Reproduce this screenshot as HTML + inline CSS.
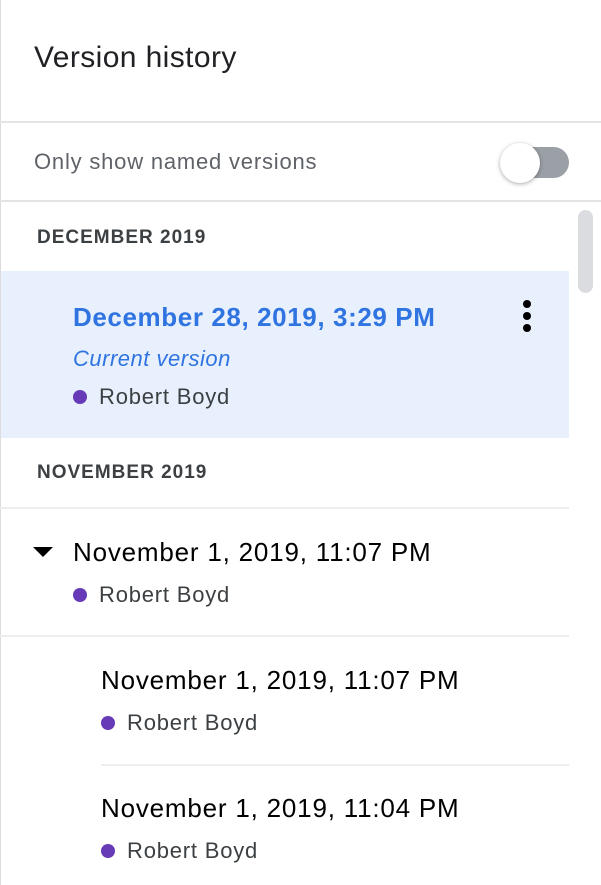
<!DOCTYPE html>
<html><head><style>
body{margin:0;width:601px;height:885px;overflow:hidden;background:#fff;font-family:"Liberation Sans",Arial,sans-serif;position:relative}
.a{position:absolute;white-space:nowrap}
.ln{position:absolute;height:2px;background:#e3e4e6}
.dot{position:absolute;width:14px;height:14px;border-radius:50%;background:#673ab7}
.name{font-size:22px;color:#3c4043;letter-spacing:0.8px}
.t{font-size:26px;color:#000;letter-spacing:0.8px}
.h{font-size:19px;font-weight:bold;color:#3c4043;letter-spacing:1px}
</style></head><body>
<div style="position:absolute;left:0;top:0;width:1px;height:885px;background:#dcdcdc"></div>
<div class="a" style="left:34px;top:41px;font-size:30px;color:#202124;letter-spacing:0.4px">Version history</div>
<div class="ln" style="left:0;top:121px;width:601px"></div>
<div class="a" style="left:34px;top:149px;font-size:22px;color:#5f6368;letter-spacing:0.8px">Only show named versions</div>
<div style="position:absolute;left:518px;top:147px;width:51px;height:31px;border-radius:16px;background:#9aa0a6"></div>
<div style="position:absolute;left:500px;top:143px;width:40px;height:40px;border-radius:50%;background:#fff;box-shadow:0 1px 4px rgba(0,0,0,.35)"></div>
<div class="ln" style="left:0;top:200px;width:601px"></div>
<div style="position:absolute;left:578px;top:210px;width:15px;height:83px;border-radius:8px;background:#dadce0"></div>
<div class="a h" style="left:37px;top:227px">DECEMBER 2019</div>
<div style="position:absolute;left:1px;top:271px;width:568px;height:167px;background:#e8f0fe"></div>
<div class="a" style="left:73px;top:302px;font-size:26px;font-weight:bold;color:#2f74e0;letter-spacing:0.6px">December 28, 2019, 3:29 PM</div>
<div style="position:absolute;left:523px;top:300px;width:8px;height:8px;border-radius:50%;background:#000"></div>
<div style="position:absolute;left:523px;top:312px;width:8px;height:8px;border-radius:50%;background:#000"></div>
<div style="position:absolute;left:523px;top:324px;width:8px;height:8px;border-radius:50%;background:#000"></div>
<div class="a" style="left:73px;top:346px;font-size:22px;font-style:italic;color:#2f74e0;letter-spacing:0.5px">Current version</div>
<div class="dot" style="left:73px;top:390px"></div>
<div class="a name" style="left:99px;top:384px">Robert Boyd</div>
<div class="a h" style="left:37px;top:462px">NOVEMBER 2019</div>
<div class="ln" style="left:0;top:507px;width:569px;background:#eeeeee"></div>
<svg style="position:absolute;left:33px;top:547px" width="20" height="11"><path d="M0 0H20L10 10Z" fill="#000"/></svg>
<div class="a t" style="left:73px;top:537px">November 1, 2019, 11:07 PM</div>
<div class="dot" style="left:73px;top:588px"></div>
<div class="a name" style="left:99px;top:582px">Robert Boyd</div>
<div class="ln" style="left:0;top:635px;width:569px;background:#eeeeee"></div>
<div class="a t" style="left:101px;top:665px">November 1, 2019, 11:07 PM</div>
<div class="dot" style="left:101px;top:716px"></div>
<div class="a name" style="left:127px;top:710px">Robert Boyd</div>
<div class="ln" style="left:101px;top:764px;width:468px;background:#eeeeee"></div>
<div class="a t" style="left:101px;top:793px">November 1, 2019, 11:04 PM</div>
<div class="dot" style="left:101px;top:844px"></div>
<div class="a name" style="left:127px;top:838px">Robert Boyd</div>
</body></html>
